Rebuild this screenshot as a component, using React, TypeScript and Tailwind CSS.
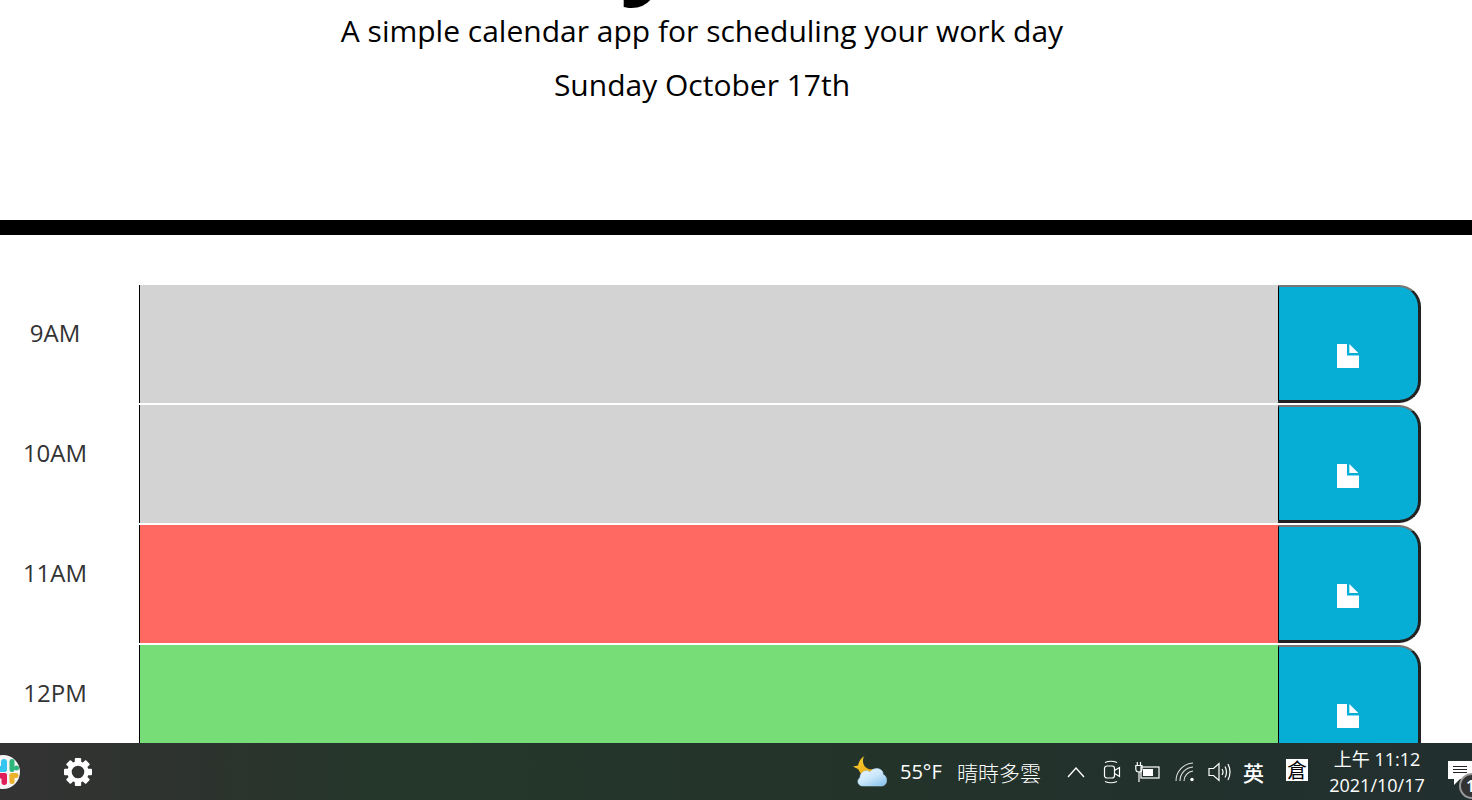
import React from "react";

const rows = [
  { label: "9AM", bg: "bg-[#d3d3d3]" },
  { label: "10AM", bg: "bg-[#d3d3d3]" },
  { label: "11AM", bg: "bg-[#ff6961]" },
  { label: "12PM", bg: "bg-[#77dd77]" },
];

function FileIcon() {
  return (
    <svg width="22" height="24" viewBox="0 0 22 24" className="block">
      <path d="M0 0H10V11.500H22V24H0Z" fill="#fff" />
      <path d="M12.300 0L21.300 9H12.300Z" fill="#fff" />
    </svg>
  );
}

function Slack() {
  return (
    <div className="w-[34px] h-[34px] -ml-[14px] shrink-0 rounded-full bg-[#f5f5f5] overflow-hidden">
      <svg width="34" height="34" viewBox="0 0 34 34" className="block">
        <rect x="15" y="4" width="6" height="13" rx="3" fill="#36c5f0" />
        <rect x="10" y="11" width="11" height="6" rx="3" fill="#36c5f0" />
        <rect x="23.500" y="4" width="5" height="13" rx="2.500" fill="#2eb67d" />
        <rect x="28" y="10.500" width="5" height="5" rx="2.500" fill="#2eb67d" />
        <rect x="23.500" y="18" width="9" height="5" rx="2.500" fill="#ecb22e" />
        <rect x="23.500" y="18" width="5" height="11" rx="2.500" fill="#ecb22e" />
        <rect x="15.500" y="18" width="5.500" height="12" rx="2.700" fill="#e01e5a" />
        <rect x="10" y="18" width="11" height="5.500" rx="2.700" fill="#e01e5a" />
      </svg>
    </div>
  );
}

function Gear() {
  return (
    <svg width="30" height="30" viewBox="0 0 30 30" className="block">
      <g fill="#fff">
        {[0, 45, 90, 135, 180, 225, 270, 315].map((a) => (
          <rect key={a} x="11.800" y="1" width="6.400" height="7" rx="1" transform={`rotate(${a} 15 15)`} />
        ))}
      </g>
      <circle cx="15" cy="15" r="8.500" fill="none" stroke="#fff" strokeWidth="4.400" />
    </svg>
  );
}

function Weather() {
  return (
    <svg width="34" height="31" viewBox="0 0 34 31" className="block">
      <defs>
        <linearGradient id="cloud" x1="0" y1="0" x2="0.8" y2="1">
          <stop offset="0" stopColor="#f4fbff" />
          <stop offset="0.55" stopColor="#c9e6fa" />
          <stop offset="1" stopColor="#8cc6ee" />
        </linearGradient>
        <linearGradient id="moon" x1="0" y1="0" x2="1" y2="1">
          <stop offset="0" stopColor="#fbd33a" />
          <stop offset="1" stopColor="#e9a30c" />
        </linearGradient>
      </defs>
      <path d="M11.500 0C9 3 9.500 9 13 11.500C15.500 13.500 18 13.500 20 13L18 18H8L5 13L0 10.500L5 9.500C6 5 8 2 11.500 0Z" fill="url(#moon)" />
      <path d="M10 30C5 30 3 24.500 7 21.500C7 16 13 13 17 16C21 10 31 12.500 30 18.500C35 20 35 29.500 29 30Z" fill="url(#cloud)" stroke="#a9d2ef" strokeWidth="0.600" />
    </svg>
  );
}

function Chevron() {
  return (
    <svg width="18" height="12" viewBox="0 0 18 12" fill="none" stroke="#fff" strokeWidth="1.300" className="block">
      <path d="M1 11L9 2L17 11" />
    </svg>
  );
}

function Meeting() {
  return (
    <svg width="18" height="24" viewBox="0 0 18 24" fill="none" stroke="#fff" strokeWidth="1.200" className="block">
      <rect x="1.500" y="6" width="10" height="12" rx="2.500" />
      <path d="M11.500 10.500L16.500 7.500V16.500L11.500 13.500" />
      <path d="M2 2.500Q8 0 14 2.500M2 21.500Q8 24 14 21.500" />
    </svg>
  );
}

function Battery() {
  return (
    <svg width="25" height="22" viewBox="0 0 25 22" fill="none" stroke="#fff" strokeWidth="1.200" className="block">
      <rect x="6" y="6" width="18" height="11" />
      <path d="M8 8H18V15H8Z" fill="#fff" stroke="none" />
      <path d="M0.800 4.500V8Q0.800 11 4 11Q7 11 7 8V4.500ZM2.300 1V4.500M5.500 1V4.500M4 11V21" />
    </svg>
  );
}

function Wifi() {
  return (
    <svg width="20" height="20" viewBox="0 0 20 20" fill="none" stroke="#fff" strokeWidth="1.100" className="block">
      <path d="M1 19A18 18 0 0 1 18 1M5 19A14 14 0 0 1 18 5M9 19A10 10 0 0 1 18 9" opacity="0.85" />
      <circle cx="17" cy="17.500" r="1.700" fill="#fff" stroke="none" />
    </svg>
  );
}

function Speaker() {
  return (
    <svg width="23" height="20" viewBox="0 0 23 20" fill="none" stroke="#fff" strokeWidth="1.200" className="block">
      <path d="M1 6.500H5.500L11 1.500V18.500L5.500 13.500H1Z" />
      <path d="M14 7Q16 10 14 13M17 4.500Q20 10 17 15.500M20 2Q24 10 20 18" />
    </svg>
  );
}

export default function App() {
  return (
    <div className="h-screen flex flex-col overflow-hidden bg-white font-['Open_Sans',sans-serif]">
      <main className="flex-1 min-h-0 overflow-hidden w-full">
        <header className="h-[220px] flex flex-col justify-end items-center overflow-hidden text-black pr-[68px] pb-[115px]">
          <h1 className="text-[108px] leading-[130px] font-bold whitespace-nowrap shrink-0 mb-[5px]">Work Day Scheduler</h1>
          <p className="text-[30px] leading-[40px] shrink-0">A simple calendar app for scheduling your work day</p>
          <p className="text-[30px] leading-[40px] mt-[14px] shrink-0">Sunday October 17th</p>
        </header>
        <div className="h-[15px] bg-black" />
        <div className="pt-[50px] flex flex-col gap-[2px] pr-[51px]">
          {rows.map((r) => (
            <div key={r.label} className="flex h-[118px] shrink-0">
              <div className="w-[139px] pr-[29px] pt-[32px] text-center text-[24px] leading-[32px] text-[#333]">{r.label}</div>
              <div className={`flex-1 border-l border-black ${r.bg}`} />
              <button className="w-[143px] bg-[#06aed5] border-l border-l-black border-t-2 border-t-[#767676] border-r-[3px] border-r-[#222] border-b-[3px] border-b-[#222] rounded-r-[22px] flex items-start justify-center pt-[57px] pr-[2px]">
                <FileIcon />
              </button>
            </div>
          ))}
        </div>
      </main>
      <footer className="h-[57px] shrink-0 flex items-center text-white bg-[linear-gradient(90deg,#333333_0%,#2e332f_12%,#25362b_25%,#23332a_60%,#222f2f_100%)] font-['Open_Sans','Noto_Sans_CJK_TC',sans-serif] overflow-hidden">
        <Slack />
        <div className="ml-[43px] shrink-0"><Gear /></div>
        <div className="flex-1" />
        <Weather />
        <span className="w-[46px] ml-[13px] text-[20px] leading-[28px] whitespace-nowrap">55°F</span>
        <span className="w-[84px] ml-[11px] text-[21px] leading-[28px] whitespace-nowrap font-['Noto_Sans_CJK_TC',sans-serif] font-light">晴時多雲</span>
        <div className="ml-[26px]"><Chevron /></div>
        <div className="ml-[18px]"><Meeting /></div>
        <div className="ml-[14px]"><Battery /></div>
        <div className="ml-[15px]"><Wifi /></div>
        <div className="ml-[13px]"><Speaker /></div>
        <span className="w-[22px] ml-[12px] text-[21px] leading-[28px] font-['Noto_Sans_CJK_TC',sans-serif] font-medium">英</span>
        <span className="w-[22px] h-[22px] ml-[21px] mb-[3px] bg-white text-black text-[20px] leading-[22px] text-center font-['Noto_Sans_CJK_TC',sans-serif]">倉</span>
        <div className="w-[100px] ml-[19px] flex flex-col items-center leading-[26px] text-[18px] whitespace-nowrap">
          <span>上午 11:12</span>
          <span>2021/10/17</span>
        </div>
        <div className="relative w-[24px] h-[57px] ml-[21px] shrink-0">
          <div className="absolute left-0 top-[18px] w-[24px] h-[18px] bg-white flex flex-col gap-[2px] px-[5px] pt-[5px]">
            <i className="h-px bg-[#222] block" />
            <i className="h-px bg-[#222] block" />
            <i className="h-px bg-[#222] block" />
          </div>
          <div className="absolute left-[6px] top-[36px] w-0 h-0 border-l-[6px] border-l-white border-b-[6px] border-b-transparent" />
          <div className="absolute left-[11px] top-[30px] w-[26px] h-[26px] rounded-full bg-[#333] border-2 border-[#999] text-[16px] leading-[22px] pl-[5px] font-semibold">1</div>
        </div>
      </footer>
    </div>
  );
}
